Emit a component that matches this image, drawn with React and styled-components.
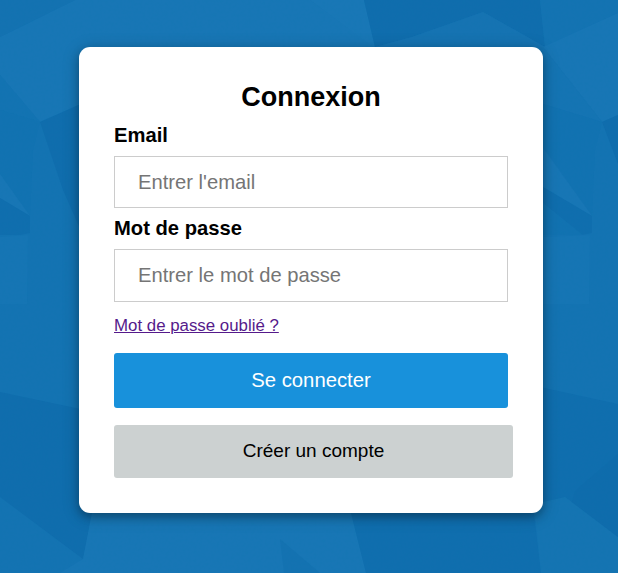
import React from "react";
import styled, { createGlobalStyle } from "styled-components";

const GlobalStyle = createGlobalStyle`
  *, *::before, *::after { box-sizing: border-box; }
  body { margin: 0; font-family: "Liberation Sans", Arial, sans-serif; color: #000; }
`;

const Page = styled.main`
  display: grid;
  width: 100%;
  height: 100vh;
  min-height: 573px;
  overflow: hidden;
  background: #1473b2;

  & > * { grid-area: 1 / 1; }
`;

const Backdrop = styled.svg`
  display: block;
  width: 618px;
  height: 573px;
`;

const Card = styled.form`
  z-index: 1;
  display: flex;
  flex-direction: column;
  align-items: flex-start;
  justify-self: start;
  align-self: start;
  width: 464px;
  height: 466px;
  margin: 47px 0 0 79px;
  padding: 35px;
  border-radius: 11px;
  background: #fff;
  box-shadow: 0 4px 8px rgba(0, 0, 0, 0.25), 0 3px 18px rgba(0, 0, 0, 0.2);
`;

const Title = styled.h1`
  width: 100%;
  margin: 0;
  font-size: 27px;
  line-height: 30px;
  text-align: center;
`;

const Label = styled.label`
  margin-top: ${(p) => p.$top}px;
  font-size: 20.2px;
  font-weight: 700;
  line-height: 24px;
`;

const Input = styled.input`
  width: 394px;
  height: ${(p) => p.$height}px;
  margin: 9px 0 0;
  padding: 0 23px;
  border: 1px solid #ccc;
  border-radius: 0;
  background: #fff;
  font-family: inherit;
  font-size: 20.2px;
  outline: none;

  &::placeholder { color: #757575; opacity: 1; }
`;

const ForgotLink = styled.a`
  margin-top: 14px;
  color: #551a8b;
  font-size: 16.85px;
  line-height: 20px;
  text-decoration: underline;
`;

const Button = styled.button`
  width: ${(p) => (p.$primary ? 394 : 399)}px;
  height: ${(p) => (p.$primary ? 55 : 53)}px;
  margin: 17px 0 0;
  padding: ${(p) => (p.$primary ? "0" : "0 0 2px")};
  border: 0;
  border-radius: 3px;
  background: ${(p) => (p.$primary ? "#1891db" : "#ccd1d1")};
  color: ${(p) => (p.$primary ? "#fff" : "#000")};
  font-family: inherit;
  font-size: ${(p) => (p.$primary ? 20.3 : 19)}px;
  cursor: pointer;
`;

const facets = [
  ["#1876b5", "75,0 310,0 375,47 90,47 90,100 40,122 0,75 0,37"],
  ["#1472b1", "0,0 75,0 0,37"],
  ["#1373b2", "0,75 40,122 0,110"],
  ["#1272b1", "0,110 40,122 33,150 30,215 0,174"],
  ["#1876b5", "0,174 30,216 0,198"],
  ["#106eae", "0,198 30,216 30,233 20,235 0,235"],
  ["#106dad", "40,122 90,100 90,250 78,224 63,190"],
  ["#1977b6", "310,0 364,0 375,47 370,45"],
  ["#106dad", "364,0 540,0 545,47 483,12 412,37 375,47"],
  ["#1673b2", "375,47 412,37 483,12 545,47"],
  ["#1473b2", "540,0 618,0 618,13 545,47"],
  ["#1876b5", "618,13 618,115 602,122 543,47"],
  ["#1574b3", "543,47 602,122 543,104"],
  ["#1272b1", "543,104 602,122 595,150 592,215 548,153 543,150"],
  ["#1876b5", "543,148 592,216 543,187"],
  ["#106eae", "543,187 592,216 592,233 582,235 543,203"],
  ["#1272b1", "543,203 583,235 543,235"],
  ["#106dad", "602,122 618,115 618,164"],
  ["#1675b4", "0,237 28,235 27,304 0,304"],
  ["#1675b4", "543,237 590,235 589,304 543,304"],
  ["#106dad", "0,392 90,411 92,513 83,559 0,497"],
  ["#1876b5", "92,513 351,513 366,573 60,573 83,559"],
  ["#1472b1", "280,539 320,573 284,573"],
  ["#106eae", "351,513 534,513 541,573 366,573"],
  ["#106eae", "540,387 618,404 618,537 565,497 534,513"],
  ["#1574b2", "534,504 565,497 618,537 618,573 541,573"],
  ["#0f6cac", "618,454 575,491 572,502 618,537"],
];

function FacetedBackdrop() {
  return (
    <Backdrop viewBox="0 0 618 573" aria-hidden="true">
      <defs>
        <filter id="grain" x="0" y="0" width="100%" height="100%">
          <feTurbulence type="fractalNoise" baseFrequency="0.35" numOctaves="2" seed="4" />
          <feColorMatrix values="0 0 0 0 0  0 0 0 0 0.22  0 0 0 0 0.4  1.6 0 0 0 -0.7" />
        </filter>
      </defs>
      {facets.map(([fill, points]) => (
        <polygon key={points} fill={fill} points={points} />
      ))}
      <rect width="618" height="573" filter="url(#grain)" opacity="0.1" />
    </Backdrop>
  );
}

export default function App() {
  return (
    <>
      <GlobalStyle />
      <Page>
        <FacetedBackdrop />
        <Card onSubmit={(e) => e.preventDefault()}>
          <Title>Connexion</Title>
          <Label htmlFor="email" $top={11}>Email</Label>
          <Input id="email" type="email" placeholder="Entrer l'email" $height={52} />
          <Label htmlFor="password" $top={8}>Mot de passe</Label>
          <Input id="password" type="password" placeholder="Entrer le mot de passe" $height={53} />
          <ForgotLink href="#">Mot de passe oublié ?</ForgotLink>
          <Button type="submit" $primary>Se connecter</Button>
          <Button type="button">Créer un compte</Button>
        </Card>
      </Page>
    </>
  );
}
